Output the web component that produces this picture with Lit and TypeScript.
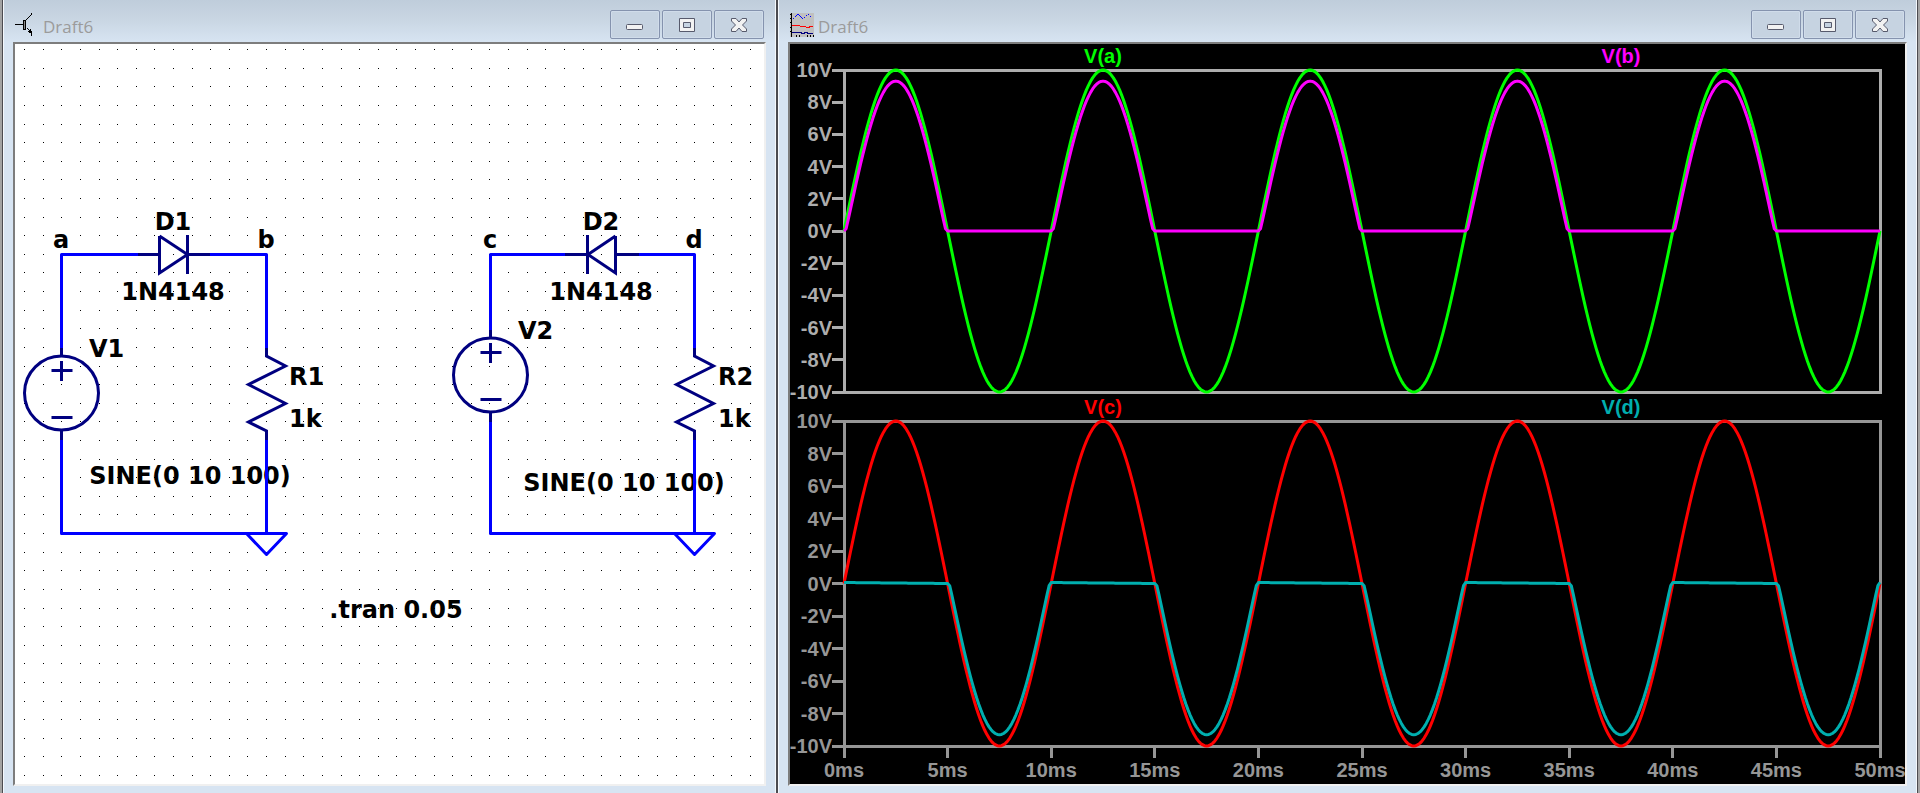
import { LitElement, html, css, svg } from "lit";
import { customElement, property } from "lit/decorators.js";

const schematicIcon = svg`
  <path d="M0 11.5h9M11 7l5-5V0M12 15l4 4v4" fill="none" stroke="#000"/>
  <rect x="8" y="7" width="3" height="10" fill="#000"/>
  <rect x="9" y="8" width="1" height="8" fill="#8a8a8a"/>
  <path d="M13 18h2v-2h1l1 4h-3z" fill="#000"/>`;

const waveformIcon = svg`
  <rect width="24" height="24" fill="#c0c0c0"/>
  <path d="M1 0v24M0 1h2M0 5h2M0 9h2M0 14h2M0 18h2M6 22v2M9 22v2M17 22v2M20 22v2M23 22v2" stroke="#000"/>
  <path d="M3 6L8 1l5 5 5-5 4 4" fill="none" stroke="#00f" stroke-dasharray="2 1"/>
  <path d="M2 13l2-1h4l2 1h4l4 2 3-2h2" fill="none" stroke="#f00"/>
  <path d="M2 19h9v1h3v-1h3v1h6" fill="none" stroke="#000080"/>`;

@customElement("mdi-window")
export class MdiWindow extends LitElement {
  static styles = css`
    :host { display: flex; flex-direction: column; min-width: 0; box-sizing: border-box;
      border: solid #f4f8fc; border-width: 0 1px; padding: 0 9px 7px;
      background: linear-gradient(#bfcddb, #c9d6e3 20px, #d7e4f2 42px, #d7e4f2); }
    .bar { display: flex; align-items: center; height: 42px; box-sizing: border-box;
      padding: 8px 2px 1px; gap: 4px; }
    .icon { width: 24px; height: 24px; flex: none; shape-rendering: crispEdges; }
    .title { flex: 1; margin: 0; font: 400 17px/26px "Open Sans", "Noto Sans", sans-serif;
      color: #9b9b9b; padding-top: 4px; }
    .controls { display: flex; gap: 2px; }
    .control { width: 50px; height: 29px; padding: 0; box-sizing: border-box;
      border: 1px solid #8593ae; border-radius: 2px; background: #c6d3e1;
      box-shadow: inset 0 0 0 1px #d0dcea; display: grid; place-items: center; }
    .glyph { width: 20px; height: 18px; fill: #f2f2f2; stroke: #575a6c; stroke-width: 1; }
    .pane { flex: 1; min-height: 0; display: flex; border: 2px solid;
      border-color: #7d7d7d #f0f0f0 #f0f0f0 #7d7d7d; }
    ::slotted(*) { flex: 1; min-width: 0; }
  `;
  @property() heading = "";
  @property() kind = "schematic";

  render() {
    return html`
      <header class="bar">
        <svg class="icon" viewBox="0 0 24 24" aria-hidden="true">
          ${this.kind === "schematic" ? schematicIcon : waveformIcon}
        </svg>
        <h2 class="title">${this.heading}</h2>
        <div class="controls">
          <button class="control" aria-label="Minimize">
            <svg class="glyph" viewBox="0 0 20 18"><rect x="1.5" y="8.5" width="16" height="5" rx="1"/></svg>
          </button>
          <button class="control" aria-label="Maximize">
            <svg class="glyph" viewBox="0 0 20 18">
              <path fill-rule="evenodd" d="M2.500 2.500h15v13h-15zM6.500 6.500v5h7v-5z"/>
            </svg>
          </button>
          <button class="control" aria-label="Close">
            <svg class="glyph" viewBox="0 0 20 18">
              <path stroke-linejoin="round" d="M2.500 2.500h4.500l3 3.500 3-3.500h4.500v2.500l-4 4 4 4v2.500h-4.500l-3-3.500-3 3.500h-4.500v-2.500l4-4-4-4z"/>
            </svg>
          </button>
        </div>
      </header>
      <div class="pane"><slot></slot></div>`;
  }
}

const GRID_PITCH = 18.615;
const GRID_COUNT = 40;

function gridPath(): string {
  let d = "";
  for (let r = 0; r < GRID_COUNT; r++)
    for (let c = 0; c < GRID_COUNT; c++)
      d += `M${Math.round(9.1 + c * GRID_PITCH)} ${Math.round(5.1 + r * GRID_PITCH)}h1v1h-1z`;
  return d;
}

@customElement("circuit-sheet")
export class CircuitSheet extends LitElement {
  static styles = css`
    :host { display: flex; background: #fff; }
    .sheet { width: 100%; height: 100%; display: block; }
    .grid { fill: #000; shape-rendering: crispEdges; }
    .wire { fill: none; stroke: #0000ff; stroke-width: 3; stroke-linejoin: round; }
    .part { fill: none; stroke: #000080; stroke-width: 3; }
    .label { font: bold 24px "DejaVu Sans", Tahoma, sans-serif; fill: #000; }
    .mid { text-anchor: middle; }
  `;

  private resistor(x: number) {
    return svg`<path class="part" d="M${x} 304V312L${x + 19} 322L${x - 18} 340.500L${x + 19} 359.500L${x - 18} 378L${x} 387V396"/>`;
  }
  private source(x: number, y: number, r: number) {
    return svg`<circle class="part" cx=${x} cy=${y} r=${r}/>
      <path class="part" d="M${x} ${y - r - 8}V${y - r}M${x} ${y + r}v10M${x - 10} ${y - 22.5}h21M${x} ${y - 32}v20M${x - 10} ${y + 24.5}h21"/>`;
  }
  private ground(x: number) {
    return svg`<path class="wire" d="M${x - 20} 489.500h40l-20 21z"/>`;
  }

  render() {
    return html`
      <svg class="sheet" viewBox="0 0 749 740" preserveAspectRatio="xMinYMin meet" role="img" aria-label="Circuit schematic">
        <path class="grid" d=${gridPath()}/>
        <g class="label">
          <text class="mid" x="46" y="204">a</text>
          <text class="mid" x="251" y="204">b</text>
          <text class="mid" x="158" y="186">D1</text>
          <text class="mid" x="158" y="256">1N4148</text>
          <text x="74" y="313">V1</text>
          <text x="274" y="341">R1</text>
          <text x="274" y="383">1k</text>
          <text class="mid" x="175" y="440">SINE(0 10 100)</text>
          <text class="mid" x="475" y="204">c</text>
          <text class="mid" x="679" y="204">d</text>
          <text class="mid" x="586" y="186">D2</text>
          <text class="mid" x="586" y="256">1N4148</text>
          <text x="503" y="295">V2</text>
          <text x="703" y="341">R2</text>
          <text x="703" y="383">1k</text>
          <text class="mid" x="609" y="447">SINE(0 10 100)</text>
          <text class="mid" x="381" y="574">.tran 0.05</text>
        </g>
        <path class="wire" d="M46.500 304V210.500H124M46.500 396V489.500H251.500V396M194 210.500H251.500V306"/>
        <path class="part" d="M123 210.500H145M172 210.500H195M144.500 192V229L172.500 210.500L144.500 192M172.500 191V230"/>
        ${this.source(46.5, 349, 37)}
        ${this.resistor(251.5)}
        ${this.ground(251.5)}
        <path class="wire" d="M475.500 288V210.500H551M475.500 378V489.500H679.500V396M624 210.500H679.500V304"/>
        <path class="part" d="M550 210.500H573M600 210.500H624M600.500 192V229L573 210.500L600.500 192M572.500 191V230"/>
        ${this.source(475.5, 331, 37)}
        ${this.resistor(679.5)}
        ${this.ground(679.5)}
      </svg>`;
  }
}

/** Transient run: 50 ms of a 10 V, 100 Hz sine. */
const SPAN_MS = 50;
const STEP_MS = 0.1;

const sine = (t: number) => 10 * Math.sin((2 * Math.PI * t) / 10);

/** Voltage across the 1k load for a given drive through a 1N4148. */
function rectified(v: number): number {
  if (v <= 0) return 0;
  let lo = 0;
  let hi = v;
  for (let i = 0; i < 40; i++) {
    const load = (lo + hi) / 2;
    const amps = load / 1000;
    const drop = 0.0453 * Math.log(1 + amps / 2.52e-9) + 0.568 * amps;
    if (load + drop > v) hi = load;
    else lo = load;
  }
  return lo;
}

const signals: Record<string, (t: number) => number> = {
  "V(a)": sine,
  "V(b)": (t) => rectified(sine(t)),
  "V(c)": sine,
  "V(d)": (t) => {
    const phase = (t % 10) / 10;
    return phase < 0.5 ? 0.06 * (1 - 2 * phase) : -rectified(-sine(t));
  },
};

function tracePath(name: string): string {
  const f = signals[name];
  const pts: string[] = [];
  for (let i = 0; i <= SPAN_MS / STEP_MS; i++) {
    const t = i * STEP_MS;
    pts.push(`${t.toFixed(2)} ${(10 - f(t)).toFixed(3)}`);
  }
  return "M" + pts.join("L");
}

@customElement("trace-plot")
export class TracePlot extends LitElement {
  static styles = css`
    :host { display: block; color: #adadad; }
    :host([dim]) { color: #969696; }
    .plot { display: block; width: 100%; height: 100%; overflow: visible; }
    .axis { fill: none; stroke: currentColor; stroke-width: 3; shape-rendering: crispEdges; }
    .text { font: bold 20px "Liberation Sans", Arial, sans-serif; fill: currentColor; }
    .end { text-anchor: end; }
    .mid { text-anchor: middle; }
    .curves { overflow: visible; }
    .curve { fill: none; stroke: currentColor; stroke-width: 3; vector-effect: non-scaling-stroke;
      stroke-linejoin: round; }
    .green { color: #00ff00; }
    .magenta { color: #ff00ff; }
    .red { color: #ff0000; }
    .teal { color: #00afaf; }
  `;
  @property({ attribute: false }) traces: { name: string; tone: string }[] = [];
  @property({ type: Boolean }) times = false;

  render() {
    const volts = [10, 8, 6, 4, 2, 0, -2, -4, -6, -8, -10];
    const ms = [0, 5, 10, 15, 20, 25, 30, 35, 40, 45, 50];
    return html`
      <svg class="plot" role="img" aria-label="Waveform plot">
        <rect class="axis" width="100%" height="100%"/>
        ${volts.map((v, i) => svg`
          <line class="axis" x1="-12" x2="0" y1="${i * 10}%" y2="${i * 10}%"/>
          <text class="text end" x="-12" y="${i * 10}%" dy="7">${v}V</text>`)}
        ${this.times ? ms.map((m, i) => svg`
          <svg x="${i * 10}%" y="100%" width="1" height="1" class="curves">
            <line class="axis" x1="0" x2="0" y1="0" y2="12"/>
            <text class="text mid" x="0" y="31">${m}ms</text>
          </svg>`) : null}
        ${this.traces.map((t, i) => svg`
          <text class="text mid ${t.tone}" x="${25 + i * 50}%" y="-7">${t.name}</text>`)}
        <svg class="curves" viewBox="0 0 50 20" preserveAspectRatio="none" width="100%" height="100%">
          ${this.traces.map((t) => svg`<path class="curve ${t.tone}" d=${tracePath(t.name)}/>`)}
        </svg>
      </svg>`;
  }
}

@customElement("app-root")
export class AppRoot extends LitElement {
  static styles = css`
    :host { display: block; }
    .desktop { display: grid; grid-template-columns: 773fr 1139fr; gap: 2px; min-height: 100vh;
      box-sizing: border-box; background: #4b4b50; border: solid #a3a3a3; border-width: 0 2px;
      padding: 0 1px; }
    .plots { display: flex; flex-direction: column; gap: 29px; background: #000;
      padding: 26px 25px 38px 54px; box-sizing: border-box; }
    .upper { flex: 322 1 0; min-height: 0; }
    .lower { flex: 325 1 0; min-height: 0; }
  `;

  render() {
    return html`
      <main class="desktop">
        <mdi-window heading="Draft6" kind="schematic">
          <circuit-sheet></circuit-sheet>
        </mdi-window>
        <mdi-window heading="Draft6" kind="waveform">
          <div class="plots">
            <trace-plot class="upper" .traces=${[
              { name: "V(a)", tone: "green" },
              { name: "V(b)", tone: "magenta" },
            ]}></trace-plot>
            <trace-plot class="lower" dim times .traces=${[
              { name: "V(c)", tone: "red" },
              { name: "V(d)", tone: "teal" },
            ]}></trace-plot>
          </div>
        </mdi-window>
      </main>`;
  }
}
